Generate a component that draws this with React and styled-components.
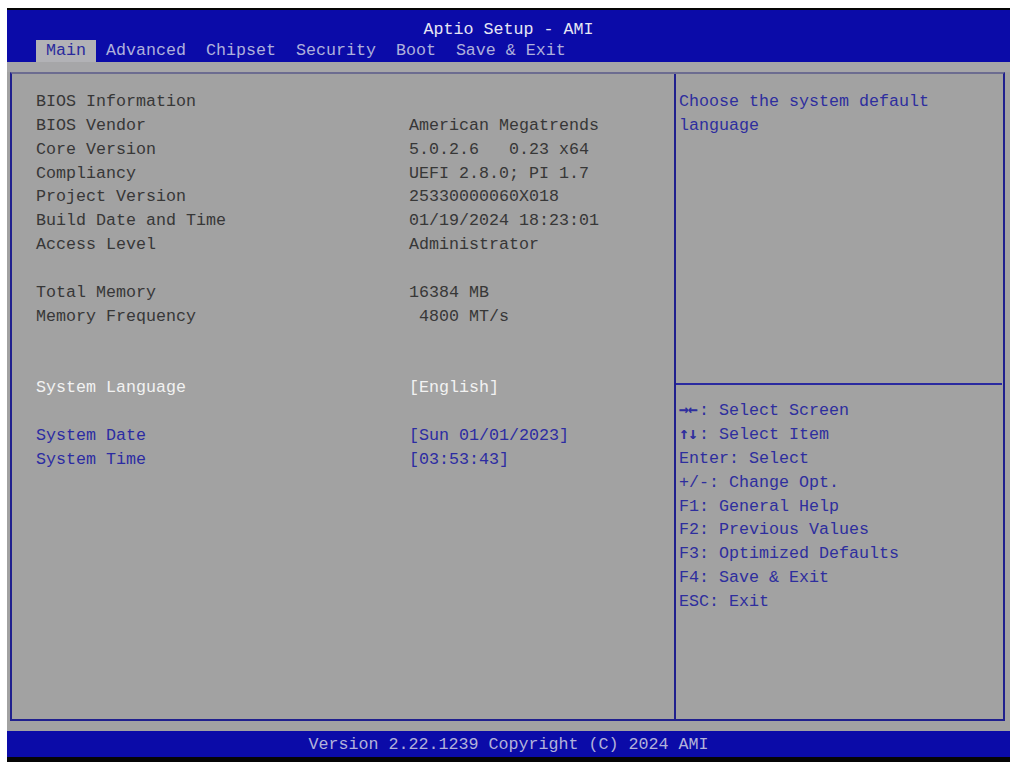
import React from "react";
import styled, { createGlobalStyle } from "styled-components";

const Global = createGlobalStyle`
  html, body { margin: 0; padding: 0; background: #ffffff; }
  body { font-family: "Liberation Mono", "DejaVu Sans Mono", monospace; }
`;

const Screen = styled.div`
  margin: 8px 0 0 7px;
  width: 1003px;
  height: 754px;
  box-sizing: border-box;
  border-top: 2px solid #050505;
  border-bottom: 5px solid #050505;
  background: #a2a2a2;
  display: flex;
  flex-direction: column;
  font-family: "Liberation Mono", "DejaVu Sans Mono", monospace;
  font-size: 16.67px;
  letter-spacing: 0;
`;

const Header = styled.header`
  background: #0b0ba8;
  padding-top: 8px;
  display: flex;
  flex-direction: column;
`;

const Title = styled.div`
  height: 22px;
  line-height: 24px;
  text-align: center;
  color: #e6e6f4;
  white-space: pre;
`;

const Tabs = styled.nav`
  display: flex;
  padding-left: 29px;
  height: 22px;
`;

const Tab = styled.div`
  padding: 0 10px;
  line-height: 22px;
  white-space: pre;
  color: ${(p) => (p.$active ? "#2a2a9c" : "#aeb0dc")};
  background: ${(p) => (p.$active ? "#b2b2b6" : "transparent")};
`;

const Band = styled.div`
  height: 10px;
  flex: none;
  background: #a6a6a8;
`;

const Body = styled.main`
  flex: 1;
  display: grid;
  grid-template-columns: 664px 1fr;
  margin: 0 5px 0 3px;
  border-top: 2px solid #6c6c90;
  border-left: 2px solid #20208e;
  border-right: 2px solid #20208e;
  border-bottom: 2px solid #20208e;
  min-height: 0;
`;

const LeftPanel = styled.section`
  border-right: 2px solid #20208e;
  padding: 16px 0 0 24px;
  display: grid;
  grid-template-columns: 373px 1fr;
  grid-auto-rows: 23.85px;
  align-content: start;
`;

const Cell = styled.div`
  line-height: 23.85px;
  white-space: pre;
  color: ${(p) =>
    p.$tone === "selected" ? "#f2f2f2" : p.$tone === "link" ? "#2c2ca2" : "#373737"};
`;

const Spacer = styled.div`
  grid-column: 1 / -1;
`;

const RightPanel = styled.aside`
  display: flex;
  flex-direction: column;
`;

const Description = styled.div`
  height: 311px;
  box-sizing: border-box;
  padding: 16px 0 0 3px;
  border-bottom: 2px solid #2a2aa0;
  margin-right: 1px;
`;

const HelpList = styled.div`
  padding: 14px 0 0 3px;
  display: flex;
  flex-direction: column;
`;

const HelpLine = styled.div`
  height: 23.875px;
  line-height: 23.875px;
  white-space: pre;
  color: #2e2e9e;
`;

const Arrows = styled.span`
  font-family: "DejaVu Sans Mono", monospace;
  font-size: 16.6px;
  line-height: 1;
  font-weight: bold;
  letter-spacing: -1px;
  margin-right: 2px;
`;

const Footer = styled.footer`
  flex: none;
  margin-top: 10px;
  height: 26px;
  line-height: 27px;
  background: #0b0ba8;
  color: #b2b2da;
  text-align: center;
  white-space: pre;
`;

const tabs = ["Main", "Advanced", "Chipset", "Security", "Boot", "Save & Exit"];

const rows = [
  { label: "BIOS Information", value: "" },
  { label: "BIOS Vendor", value: "American Megatrends" },
  { label: "Core Version", value: "5.0.2.6   0.23 x64" },
  { label: "Compliancy", value: "UEFI 2.8.0; PI 1.7" },
  { label: "Project Version", value: "25330000060X018" },
  { label: "Build Date and Time", value: "01/19/2024 18:23:01" },
  { label: "Access Level", value: "Administrator" },
  null,
  { label: "Total Memory", value: "16384 MB" },
  { label: "Memory Frequency", value: " 4800 MT/s" },
  null,
  null,
  { label: "System Language", value: "[English]", tone: "selected" },
  null,
  { label: "System Date", value: "[Sun 01/01/2023]", tone: "link" },
  { label: "System Time", value: "[03:53:43]", tone: "link" },
];

const help = [
  { keys: "\u2192\u2190", arrows: true, text: ": Select Screen" },
  { keys: "\u2191\u2193", arrows: true, text: ": Select Item" },
  { keys: "Enter", text: ": Select" },
  { keys: "+/-", text: ": Change Opt." },
  { keys: "F1", text: ": General Help" },
  { keys: "F2", text: ": Previous Values" },
  { keys: "F3", text: ": Optimized Defaults" },
  { keys: "F4", text: ": Save & Exit" },
  { keys: "ESC", text: ": Exit" },
];

export default function App() {
  return (
    <>
      <Global />
      <Screen>
        <Header>
          <Title>Aptio Setup - AMI</Title>
          <Tabs>
            {tabs.map((t, i) => (
              <Tab key={t} $active={i === 0}>
                {t}
              </Tab>
            ))}
          </Tabs>
        </Header>
        <Band />
        <Body>
          <LeftPanel>
            {rows.map((r, i) =>
              r ? (
                <React.Fragment key={i}>
                  <Cell $tone={r.tone}>{r.label}</Cell>
                  <Cell $tone={r.tone}>{r.value}</Cell>
                </React.Fragment>
              ) : (
                <Spacer key={i} />
              )
            )}
          </LeftPanel>
          <RightPanel>
            <Description>
              <HelpLine>Choose the system default</HelpLine>
              <HelpLine>language</HelpLine>
            </Description>
            <HelpList>
              {help.map((h) => (
                <HelpLine key={h.text}>
                  {h.arrows ? <Arrows>{h.keys}</Arrows> : h.keys}
                  {h.text}
                </HelpLine>
              ))}
            </HelpList>
          </RightPanel>
        </Body>
        <Footer>Version 2.22.1239 Copyright (C) 2024 AMI</Footer>
      </Screen>
    </>
  );
}
